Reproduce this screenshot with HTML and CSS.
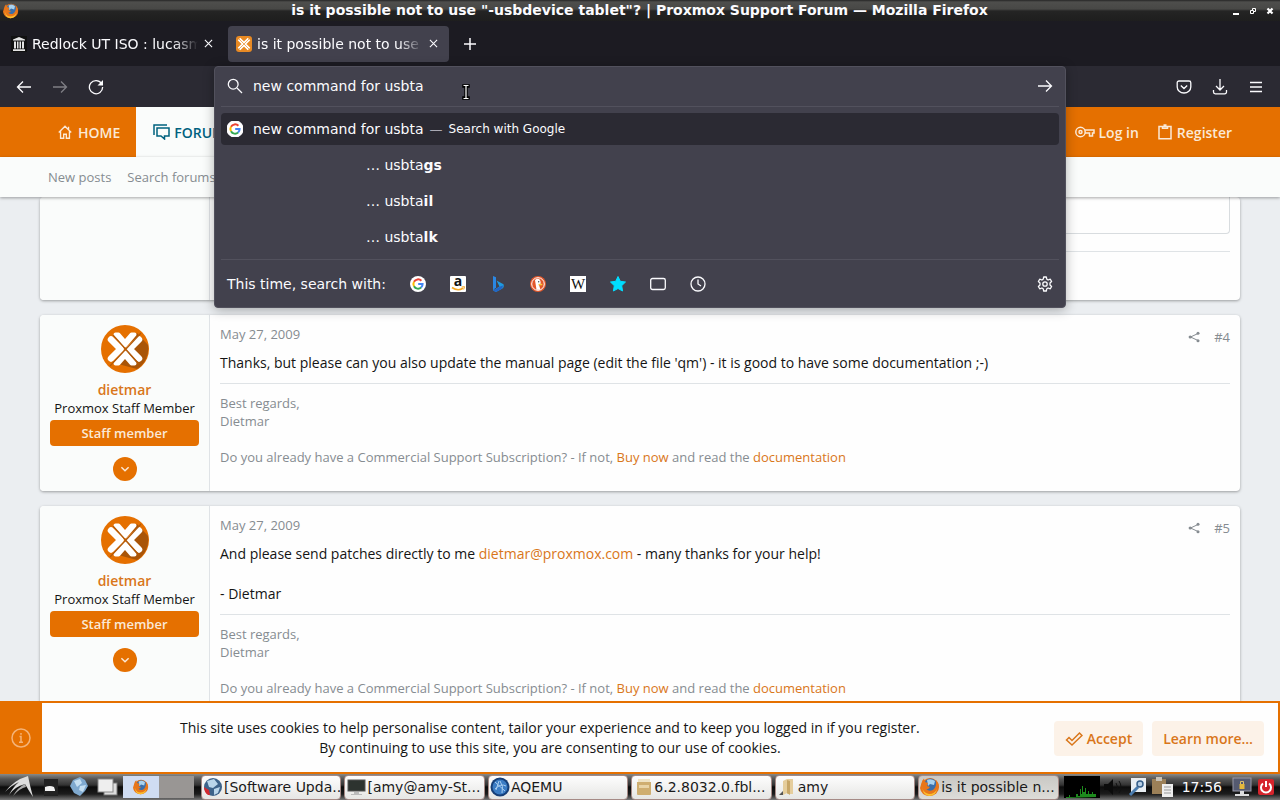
FILE: index.html
```
<!DOCTYPE html>
<html lang="en">
<head>
<meta charset="utf-8">
<title>is it possible not to use "-usbdevice tablet"? | Proxmox Support Forum</title>
<link rel="stylesheet" href="styles.css">
</head>
<body>

<svg class="defs" aria-hidden="true">
<symbol id="google" viewBox="0 0 16 16">
<circle cx="8" cy="8" r="8" fill="#fff"/>
<g fill="none" stroke-width="2"><path d="M11.4 4.8A4.6 4.6 0 0 0 4 5.8" stroke="#ea4335"/><path d="M4 5.8a4.6 4.6 0 0 0 0 4.5" stroke="#fbbc05"/><path d="M4 10.3a4.6 4.6 0 0 0 7.1 1.2" stroke="#34a853"/><path d="M11.1 11.5A4.6 4.6 0 0 0 12.6 8H8.2" stroke="#4285f4"/></g>
</symbol>
<symbol id="firefox" viewBox="0 0 20 20">
<circle cx="10" cy="10" r="9" fill="#e2731b"/>
<circle cx="10.500" cy="8" r="6.500" fill="#3a6eaa"/>
<path d="M7 3q4-2 8 1l-1 4-4-1-2 2z" fill="#a9d2ee"/>
<path d="M1.500 6Q2 3 4 1.500L5 5l3 1-1 3 3 1q-2 3-4 2 3 3 7 1 4-3 3-10 4 4 2 9-3 7-9 7-8-1-9-8z" fill="#e8761a"/>
<path d="M2 8q0 8 7 9 6 0 8-5-1 7-8 7-7-1-7-11z" fill="#fbc02f"/>
</symbol>
<symbol id="proxmox" viewBox="0 0 48 48">
<circle cx="24" cy="24" r="24" fill="#e57000"/>
<path d="M36 8l11 12a24 24 0 0 1-11 24L17 39z" fill="#a95508"/>
<g fill="none" stroke="#fff" stroke-width="6.500" stroke-linejoin="round" stroke-linecap="round"><path d="M14.500 9.500h3L24 17l6.500-7.500h3L24 20.500z" fill="#fff" stroke-width="4"/><path d="M14.500 38.500h3L24 31l6.500 7.500h3L24 27.500z" fill="#fff" stroke-width="4"/><path d="M10 14.500l9.500 9.500L10 33.500M38 14.500L28.500 24l9.500 9.500"/></g>
<path d="M9 41L40 8M12 10l26 29" stroke="#b35a08" stroke-width="1.200"/>
</symbol>
<symbol id="share" viewBox="0 0 12 12">
<path d="M10 2.500L2.500 6l7.500 3.500" fill="none" stroke="#868c91"/><circle cx="10" cy="2.200" r="1.500" fill="#868c91"/><circle cx="2.200" cy="6" r="1.600" fill="#868c91"/><circle cx="10" cy="9.800" r="1.500" fill="#868c91"/>
</symbol>
</svg>

<div class="titlebar">
<svg class="title-icon" viewBox="0 0 20 20"><use href="#firefox"/></svg>
<div class="title-text">is it possible not to use "-usbdevice tablet"? | Proxmox Support Forum — Mozilla Firefox</div>
<div class="win-buttons">
<button aria-label="Minimize"><svg viewBox="0 0 8 8"><path d="M1 7h6" stroke="#fff" stroke-width="2"/></svg></button>
<button aria-label="Restore"><svg viewBox="0 0 8 8"><path d="M1.500 3.500h3v3h-3zM3.500 3V1.500h3v3H5" fill="none" stroke="#fff"/></svg></button>
<button aria-label="Close window"><svg viewBox="0 0 8 8"><path d="M1.500 1.500l5 5M6.500 1.500l-5 5" stroke="#fff" stroke-width="2.200"/></svg></button>
</div>
</div>

<div class="tabs">
<div class="tab">
<svg class="favicon" viewBox="0 0 16 16"><rect width="16" height="16" fill="#111"/><path d="M8 1l6 2.500v1H2v-1zM3 5.500h2v7H3zM6 5.500h1.500v7H6zM8.500 5.500H10v7H8.500zM11 5.500h2v7h-2zM2 13.200h12V15H2z" fill="#e4e4e4"/></svg>
<span class="tab-label">Redlock UT ISO : lucasm</span>
<button class="tab-close" aria-label="Close tab"><svg viewBox="0 0 10 10"><path d="M1 1l8 8M9 1L1 9" stroke="#fbfbfe" stroke-width="1.200"/></svg></button>
</div>
<div class="tab active">
<svg class="favicon" viewBox="0 0 16 16"><rect width="16" height="16" rx="3" fill="#e88a24"/><path d="M3 3l10 10M13 3L3 13" stroke="#fff" stroke-width="3.600"/><path d="M3 13L13 3M3 3l10 10" stroke="#e88a24" stroke-width=".7"/></svg>
<span class="tab-label">is it possible not to use "</span>
<button class="tab-close" aria-label="Close tab"><svg viewBox="0 0 10 10"><path d="M1 1l8 8M9 1L1 9" stroke="#fbfbfe" stroke-width="1.200"/></svg></button>
</div>
<button class="new-tab" aria-label="New tab"><svg viewBox="0 0 12 12"><path d="M6 0v12M0 6h12" stroke="#fbfbfe" stroke-width="1.500"/></svg></button>
</div>

<div class="toolbar">
<button aria-label="Back"><svg viewBox="0 0 16 16"><path d="M15 8H1.500M7 2.500L1.500 8 7 13.500"/></svg></button>
<button aria-label="Forward" class="off"><svg viewBox="0 0 16 16"><path d="M1 8h13.500M9 2.500L14.500 8 9 13.500"/></svg></button>
<button aria-label="Reload"><svg viewBox="0 0 16 16"><path d="M13.500 4.500A6.600 6.600 0 1 0 14.600 8"/><path d="M15 1v5.500H9.500z" fill="#fbfbfe" stroke="none"/></svg></button>
<span class="spacer"></span>
<button aria-label="Pocket"><svg viewBox="0 0 16 16"><path d="M3 2h10a1.800 1.800 0 0 1 1.800 1.800V8a6.800 6 0 0 1-13.600 0V3.800A1.800 1.800 0 0 1 3 2zM4.800 6.500L8 9.500l3.200-3"/></svg></button>
<button aria-label="Downloads"><svg viewBox="0 0 16 16"><path d="M8 0v11M4 7l4 4 4-4M1.500 11v2A1.800 1.800 0 0 0 3.300 14.800h9.400a1.800 1.800 0 0 0 1.800-1.800v-2"/></svg></button>
<button aria-label="Menu"><svg viewBox="0 0 16 16"><path d="M2 3.500h12M2 8h12M2 12.500h12"/></svg></button>

<div class="urlbar">
<div class="url-row">
<svg class="ico" viewBox="0 0 16 16"><circle cx="6.200" cy="6.200" r="4.900"/><path d="M10 10l5 5"/></svg>
<input type="text" aria-label="Search or enter address" value="new command for usbta">
<button aria-label="Go"><svg class="ico" viewBox="0 0 16 16"><path d="M1 8h13.500M9 2.500L14.500 8 9 13.500"/></svg></button>
</div>
<a class="result selected" href="#"><svg class="ico" viewBox="0 0 16 16"><use href="#google"/></svg><span>new command for usbta</span><i>—</i><small>Search with Google</small></a>
<a class="result tail" href="#"><span>… usbta<b>gs</b></span></a>
<a class="result tail" href="#"><span>… usbta<b>il</b></span></a>
<a class="result tail" href="#"><span>… usbta<b>lk</b></span></a>
<div class="engines">
<span class="engines-label">This time, search with:</span>
<button aria-label="Google"><svg viewBox="0 0 16 16"><use href="#google"/></svg></button>
<button aria-label="Amazon"><svg viewBox="0 0 16 16"><rect width="16" height="16" rx="1" fill="#fff"/><text x="8" y="10" text-anchor="middle" class="logo-a">a</text><path d="M2 11.500q5.500 4 11 .8" fill="none" stroke="#f7a823" stroke-width="1.600"/><path d="M11.500 11l3-.3-.8 2.800" fill="none" stroke="#f7a823"/></svg></button>
<button aria-label="Bing"><svg viewBox="0 0 16 16"><path d="M3 0l3 1.200v10L3 14.500z" fill="#2b87e3"/><path d="M6.500 4.500l7 3.800q1 3-1.500 4.500l-6 3.200-3-1.500 6.500-4z" fill="#1f9be0"/><path d="M3 14.500l7-4 3-1q0 2.500-2 3.700L6 16z" fill="#2364c4"/></svg></button>
<button aria-label="DuckDuckGo"><svg viewBox="0 0 16 16"><circle cx="8" cy="8" r="8" fill="#e4582b"/><circle cx="8" cy="8" r="6.300" fill="none" stroke="#fff"/><path d="M5 4q3-2.500 5 0 1 2 .5 4L9 9l1.500 4.800H6.500z" fill="#fff"/><path d="M8.500 7.800h3.800v1.500H8.500z" fill="#fcc63a"/><circle cx="8.700" cy="5.700" r=".7" fill="#345"/></svg></button>
<button aria-label="Wikipedia"><svg viewBox="0 0 16 16"><rect width="16" height="16" fill="#fff"/><text x="8" y="13" text-anchor="middle" class="logo-w">W</text></svg></button>
<button aria-label="Bookmarks"><svg viewBox="0 0 16 16"><path d="M8 .5l2.300 4.800 5.200.7-3.800 3.700.9 5.300L8 12.500 3.400 15l.9-5.300L.5 6l5.200-.7z" fill="#00ddff" stroke="#00ddff" stroke-linejoin="round"/></svg></button>
<button aria-label="Tabs"><svg class="ico" viewBox="0 0 16 16"><rect x=".7" y="2.500" width="14.600" height="11" rx="1.800"/></svg></button>
<button aria-label="History"><svg class="ico" viewBox="0 0 16 16"><circle cx="8" cy="8" r="7"/><path d="M8 3.500V8l3 2"/></svg></button>
<span class="spacer"></span>
<button aria-label="Search settings"><svg class="ico" viewBox="0 0 16 16"><circle cx="8" cy="8" r="2.200"/><path d="M6.700 1h2.600l.5 2.200 1.300.8 2.200-.8 1.300 2.300L13 7v2l1.600 1.500-1.300 2.300-2.200-.8-1.300.8-.5 2.200H6.700l-.5-2.200-1.300-.8-2.200.8-1.300-2.300L3 9V7L1.400 5.500l1.300-2.300 2.200.8 1.300-.8z" stroke-linejoin="round"/></svg></button>
</div>
<svg class="cursor" viewBox="0 0 8 16"><path d="M1 1h6v2H5v10h2v2H1v-2h2V3H1z" fill="#000" stroke="#000" stroke-width="1.500"/><path d="M1.500 1.500h5M1.500 14.500h5M4 1.500v13" stroke="#fff" stroke-width="1.200"/></svg>
</div>
</div>

<div class="page">
<nav class="nav">
<a class="nav-home" href="#"><svg viewBox="-1 -1 18 18"><path d="M1 8.500l7-7 7 7M3 7v8h3.500v-4.500h3V15H13V7M12 2v3.500"/></svg>HOME</a>
<a class="nav-forums" href="#"><svg viewBox="0 0 18 16"><path d="M2 11V1h13M5 4h12v8h-4.500v3L9 12H5z"/></svg>FORUMS</a>
<span class="spacer"></span>
<a href="#"><svg class="key" viewBox="0 0 20 12"><circle cx="5.500" cy="6" r="4.700"/><circle cx="5.500" cy="6" r="1.500"/><path d="M10 4h9v3h-1.500v3h-3V7H10"/></svg>Log in</a>
<a href="#"><svg viewBox="0 0 16 16"><path d="M2 2.500h12v12.300H2zM5.500 2.500h5v1.700h-5zM6.500 1h3"/></svg>Register</a>
</nav>
<div class="subnav"><a href="#">New posts</a><a href="#">Search forums</a></div>

<div class="posts">
<div class="post first">
<div class="user"></div>
<div class="message"><div class="quote"></div><div class="sig"></div></div>
</div>

<div class="post">
<div class="user">
<svg class="avatar" viewBox="0 0 48 48"><use href="#proxmox"/></svg>
<a class="name" href="#">dietmar</a>
<div class="role">Proxmox Staff Member</div>
<div class="staff">Staff member</div>
<button class="more" aria-label="Show details"><svg viewBox="0 0 10 10"><path d="M2 3.500l3 3 3-3"/></svg></button>
</div>
<div class="message">
<div class="meta"><span>May 27, 2009</span><span class="meta-right"><svg viewBox="0 0 12 12"><use href="#share"/></svg><a href="#">#4</a></span></div>
<p>Thanks, but please can you also update the manual page (edit the file 'qm') - it is good to have some documentation ;-)</p>
<div class="sig">Best regards,<br>Dietmar<br><br>Do you already have a Commercial Support Subscription? - If not, <a href="#">Buy now</a> and read the <a href="#">documentation</a></div>
</div>
</div>

<div class="post">
<div class="user">
<svg class="avatar" viewBox="0 0 48 48"><use href="#proxmox"/></svg>
<a class="name" href="#">dietmar</a>
<div class="role">Proxmox Staff Member</div>
<div class="staff">Staff member</div>
<button class="more" aria-label="Show details"><svg viewBox="0 0 10 10"><path d="M2 3.500l3 3 3-3"/></svg></button>
</div>
<div class="message">
<div class="meta"><span>May 27, 2009</span><span class="meta-right"><svg viewBox="0 0 12 12"><use href="#share"/></svg><a href="#">#5</a></span></div>
<p>And please send patches directly to me <a href="#">dietmar@proxmox.com</a> - many thanks for your help!<br><br>- Dietmar</p>
<div class="sig">Best regards,<br>Dietmar<br><br>Do you already have a Commercial Support Subscription? - If not, <a href="#">Buy now</a> and read the <a href="#">documentation</a></div>
</div>
</div>
</div>

<div class="cookies">
<div class="cookie-icon"><svg viewBox="0 0 20 20"><circle cx="10" cy="10" r="9"/><path d="M8.500 8.500H10V14M8 14.200h4M10 5v1.800"/></svg></div>
<div class="cookie-text">This site uses cookies to help personalise content, tailor your experience and to keep you logged in if you register.<br>By continuing to use this site, you are consenting to our use of cookies.</div>
<div class="cookie-buttons">
<button><svg viewBox="0 0 18 16"><path d="M1.500 9L4 6.500l3 3L14.500 2 17 4.500 7 14z"/></svg>Accept</button>
<button>Learn more…</button>
</div>
</div>
</div>

<div class="taskbar">
<div class="launchers">
<button aria-label="Menu"><svg class="bird" viewBox="0 0 28 24"><path d="M0 17Q9 5 23 1q2 10 5 21-4-6-8-13Q9 12 4 20 8 12 14 7 7 10 0 17z" fill="#ddd"/><path d="M8 21q5-9 12-12l1 3q-6 1-13 9z" fill="#aaa"/></svg></button>
<button aria-label="Files"><svg viewBox="0 0 20 24"><rect x="4" y="4" width="14" height="17" fill="#222"/><path d="M5 12q5-2 9 0l1 3v1H5z" fill="#f2f2f2"/></svg></button>
<button aria-label="Web"><svg viewBox="0 0 20 24"><path d="M4 5l7-3 5 3 3 6-3 5-5 5-6-3-4-7z" fill="#7fa9cf"/><path d="M5 6l6-2 2 4-5 4zM11 11l6-1-3 7-4-2z" fill="#c5dff2"/></svg></button>
<button aria-label="Show desktop"><svg viewBox="0 0 22 24"><rect x="7" y="8" width="13" height="12" fill="#ddd" stroke="#777"/><rect x="1" y="4" width="15" height="13" fill="#eee" stroke="#888"/></svg></button>
</div>
<div class="pager"><button class="current" aria-label="Desktop 1"><svg viewBox="0 0 20 20"><use href="#firefox"/></svg></button><button aria-label="Desktop 2"></button></div>
<div class="tasks">
<button><svg viewBox="0 0 20 20"><circle cx="10" cy="10" r="9" fill="#3d638a"/><path d="M4 4l7-2 4 5-5 4-4-1zM11 12l6-2-2 6-4 2z" fill="#b9d5ea"/><path d="M1 10l5 3 1 5-2 0q-4-3-4-8z" fill="#d22a30"/></svg>[Software Upda...</button>
<button><svg viewBox="0 0 20 20"><rect x="2" y="3" width="17" height="11" fill="#2d332f" stroke="#555"/><path d="M8 15h5v2h3v1H5v-1h3z" fill="#bbb"/></svg>[amy@amy-St...</button>
<button><svg viewBox="0 0 20 20"><circle cx="10" cy="10" r="9.500" fill="#163f78"/><circle cx="10" cy="10" r="7.500" fill="#3b7cc4"/><path d="M5 5l10 9M6 13l3-9M5 12q6-6 11-3M10 4q4 5 2 12" fill="none" stroke="#a8cdf0"/></svg>AQEMU</button>
<button><svg viewBox="0 0 20 20"><path d="M5 2h12v8H5z" fill="#efe3c4"/><path d="M4 5h14v12q0 1-1 1H5q-1 0-1-1z" fill="#cfae70"/><path d="M6 8h10v3H6z" fill="#e9d4a6"/></svg>6.2.8032.0.fbl...</button>
<button><svg viewBox="0 0 20 20"><path d="M6 4l4-2v14l-4 2zM10 2h6v15h-6z" fill="#e5cd9c"/><path d="M10 3l3 1v14l-3-2z" fill="#c7a667"/><path d="M2 18l4-4v4z" fill="#555"/></svg>amy</button>
<button class="current"><svg viewBox="0 0 20 20"><use href="#firefox"/></svg>is it possible n...</button>
</div>
<div class="tray">
<svg class="cpu" viewBox="0 0 36 22"><rect width="36" height="22" fill="#000"/><path d="M2 22v-1h3v-2h1v2h6v-3h2v2h2v-7h1v5h1v-8h1v6h2v-4h1v6h2v-3h1v3h3v-2h1v2h3v3z" fill="#1d8a1d"/></svg>
<svg class="wide" viewBox="0 0 24 22"><path d="M2 8h4l5-5v16l-5-5H2z" fill="#0b0b0b"/><path d="M14 7q3 4 0 8M17 5q4 6 0 12" fill="none" stroke="#111"/></svg>
<svg viewBox="0 0 20 22"><rect x="3" y="2" width="15" height="14" fill="#e8edf2"/><path d="M2 19l8-8" stroke="#4a7cae" stroke-width="3"/><circle cx="12" cy="8" r="3" fill="#b7cfe6" stroke="#345d88" stroke-width="1.500"/></svg>
<svg class="wide" viewBox="0 0 24 22"><path d="M2 3h14v15H2z" fill="#9c8058"/><path d="M6 1h6v4H6z" fill="#c7c2b8"/><path d="M12 8h11v13H12z" fill="#eee"/><path d="M14 11h7M14 14h7M14 17h7" stroke="#999"/></svg>
<span class="clock">17:56</span>
<svg class="wide" viewBox="0 0 24 22"><rect x="3" y="2" width="18" height="13" fill="#555a70" stroke="#9a9aa8"/><path d="M10 15h4v3h5v2H5v-2h5z" fill="#ddd"/><path d="M9.500 8h5v5h-5z" fill="#e5b93c"/><path d="M10.500 8V5.500h3V8" fill="none" stroke="#ddc070"/></svg>
<svg viewBox="0 0 20 22"><rect x="2" y="3" width="16" height="16" rx="2" fill="#d6242c"/><path d="M7 7.500a5 5 0 1 0 6 0M10 5v6" fill="none" stroke="#fff" stroke-width="2"/></svg>
</div>
</div>

</body>
</html>
```
FILE: styles.css
```
* {
box-sizing:border-box;
}
body {
margin:0;
height:100vh;
display:flex;
flex-direction:column;
overflow:hidden;
background-color:#1c1b22;
font-family:"DejaVu Sans", sans-serif;
font-size:14px;
color:#fbfbfe;
}
button {
border:0;
padding:0;
background:none;
font:inherit;
color:inherit;
display:flex;
align-items:center;
justify-content:center;
}
a {
text-decoration:none;
color:inherit;
}
svg {
display:block;
flex:none;
}
.defs {
position:absolute;
width:0;
height:0;
}
.spacer {
flex:1;
}

/* window title */
.titlebar {
height:21px;
display:flex;
align-items:center;
background:linear-gradient(#262626 0, #4e4e4c 2px, #484846 9px, #242424 11px, #1e1e1e 100%);
}
.title-icon {
width:16px;
height:16px;
margin-left:3px;
}
.title-text {
flex:1;
text-align:center;
font-weight:bold;
line-height:18px;
padding:0 0 2px 28px;
}
.win-buttons {
display:flex;
gap:9px;
padding-right:6px;
}
.win-buttons svg {
width:8px;
height:8px;
}

/* tabs */
.tabs {
height:45px;
display:flex;
align-items:center;
padding-left:3px;
gap:4px;
}
.tab {
width:221px;
height:36px;
display:flex;
align-items:center;
padding:0 10px 0 8px;
border-radius:4px;
}
.tab.active {
background-color:#42414d;
}
.favicon {
width:16px;
height:16px;
margin-right:5px;
}
.tab-label {
flex:1;
overflow:hidden;
white-space:nowrap;
-webkit-mask-image:linear-gradient(to left, transparent, #000 24px);
mask-image:linear-gradient(to left, transparent, #000 24px);
}
.tab-close {
width:12px;
margin-left:4px;
}
.tab-close svg {
width:9px;
height:9px;
}
.new-tab {
width:34px;
}
.new-tab svg {
width:12px;
height:12px;
}

/* toolbar and address drop-down */
.toolbar {
position:relative;
z-index:2;
height:41px;
display:flex;
align-items:center;
padding:0 6px;
background-color:#2b2a33;
}
.toolbar > button {
width:36px;
height:36px;
}
.toolbar > button > svg,
.ico {
width:16px;
height:16px;
fill:none;
stroke:#fbfbfe;
stroke-width:1.3;
}
.off {
opacity:.4;
}
.urlbar {
position:absolute;
top:0;
left:214px;
right:214px;
background-color:#42414d;
border:1px solid #52515d;
border-radius:4px;
padding:0 6px;
box-shadow:0 2px 12px rgba(0,0,0,.3);
}
.url-row {
display:flex;
align-items:center;
height:40px;
padding:0 6px 2px;
gap:10px;
border-bottom:1px solid #52515d;
margin-bottom:6px;
}
.url-row input {
flex:1;
border:0;
padding:0;
outline:0;
background:none;
font:inherit;
color:inherit;
}
.result {
display:flex;
align-items:center;
height:32px;
padding:0 6px;
margin-bottom:4px;
border-radius:4px;
}
.result.selected {
background-color:#2b2a33;
}
.result .ico {
margin-right:10px;
}
.result i {
font-style:normal;
font-size:13px;
color:#aaa9b3;
margin:0 6px;
}
.result small {
font-size:12px;
}
.result.tail {
padding-left:145px;
}
.engines {
display:flex;
align-items:center;
height:48px;
margin-top:6px;
padding:0 6px;
border-top:1px solid #52515d;
}
.engines-label {
margin-right:12px;
}
.engines button {
width:40px;
height:32px;
}
.engines button:last-child {
width:16px;
}
.engines svg {
width:16px;
height:16px;
}
.logo-a {
font:bold 14px "Open Sans", sans-serif;
fill:#111;
}
.logo-w {
font:15px "Liberation Serif", serif;
fill:#111;
}
.cursor {
position:absolute;
left:247px;
top:17px;
width:8px;
height:16px;
}

/* forum page */
.page {
flex:1;
min-height:0;
position:relative;
overflow:hidden;
display:flex;
flex-direction:column;
background-color:#ebeef1;
font-family:"Open Sans", sans-serif;
color:#141414;
}
.nav {
flex:none;
height:50px;
display:flex;
background-color:#e57000;
color:#fbe9d6;
font-weight:600;
padding-right:32px;
}
.nav a {
display:flex;
align-items:center;
gap:4px;
padding:0 16px 0 2px;
}
.nav svg {
width:16px;
height:16px;
fill:none;
stroke:currentColor;
stroke-width:1.5;
}
.nav .key {
width:20px;
height:12px;
}
.nav .nav-home {
padding:0 16px 0 57px;
gap:5px;
}
.nav .nav-forums {
background-color:#fafcfb;
color:#00617f;
padding:0 16px;
}
.nav .nav-forums svg {
width:18px;
}
.subnav {
flex:none;
z-index:1;
height:40px;
display:flex;
align-items:center;
gap:16px;
padding-left:48px;
background-color:#fafcfb;
color:#868c91;
font-size:13px;
box-shadow:0 1px 3px rgba(0,0,0,.35);
}
.posts {
padding:0 40px;
}
.post {
display:flex;
margin-bottom:15px;
background-color:#fefefe;
border-radius:4px;
box-shadow:0 1px 3px rgba(0,0,0,.35);
}
.user {
width:170px;
flex:none;
padding:10px;
background-color:#fafcfb;
border-right:1px solid #dfe3e6;
border-radius:4px 0 0 4px;
text-align:center;
font-size:13px;
line-height:18px;
}
.avatar {
width:48px;
height:48px;
margin:0 auto 7px;
}
.name {
display:block;
font-size:14px;
font-weight:600;
line-height:19px;
color:#d9761a;
}
.staff {
margin-top:3px;
line-height:26px;
background-color:#e57000;
border-radius:4px;
color:#fbe9d6;
font-weight:600;
}
.more {
width:24px;
height:24px;
margin:11px auto 0;
border-radius:50%;
background-color:#e57000;
}
.more svg {
width:12px;
height:12px;
fill:none;
stroke:#fbe9d6;
stroke-width:1.2;
}
.message {
flex:1;
padding:10px;
}
.message a {
color:#d9761a;
}
.meta {
display:flex;
justify-content:space-between;
font-size:13px;
line-height:18px;
color:#868c91;
}
.meta-right {
display:flex;
align-items:center;
gap:14px;
padding-top:4px;
margin-bottom:-4px;
height:20px;
}
.meta-right svg {
width:12px;
height:12px;
}
.message .meta-right a {
color:#868c91;
}
.message p {
margin:10px 0;
line-height:20px;
}
.sig {
border-top:1px solid #dfe3e6;
padding-top:10px;
font-size:13px;
line-height:18px;
color:#868c91;
}
.first .message {
padding-top:0;
padding-bottom:38px;
}
.quote {
height:37px;
margin-bottom:17px;
border:1px solid #d8dcdf;
border-top:0;
border-radius:0 0 4px 4px;
}

/* cookie notice */
.cookies {
position:absolute;
z-index:1;
left:0;
right:0;
bottom:0;
height:73px;
display:flex;
align-items:center;
background-color:#fefefe;
border:2px solid #e57000;
border-left:0;
padding-right:14px;
}
.cookie-icon {
align-self:stretch;
width:42px;
display:flex;
align-items:center;
justify-content:center;
background-color:#e57000;
}
.cookie-icon svg {
width:20px;
height:20px;
fill:none;
stroke:#f4b377;
stroke-width:1.5;
}
.cookie-text {
flex:1;
text-align:center;
line-height:20px;
padding-left:4px;
}
.cookie-buttons {
display:flex;
gap:9px;
padding-top:2px;
}
.cookie-buttons button {
height:35px;
padding:0 11px;
gap:4px;
border-radius:4px;
background-color:#fcf2e8;
color:#d9761a;
font-weight:600;
}
.cookie-buttons svg {
width:18px;
height:16px;
fill:none;
stroke:#d9761a;
stroke-width:1.5;
}

/* desktop panel */
.taskbar {
height:26px;
display:flex;
align-items:center;
background:linear-gradient(#8a8a88 0, #555 5px, #333 11px, #0c0c0c 13px, #1c1c1c 20px, #777 100%);
}
.launchers {
display:flex;
align-items:center;
gap:5px;
width:123px;
padding-left:5px;
}
.launchers svg {
width:24px;
height:24px;
}
.launchers .bird {
width:28px;
}
.pager {
display:flex;
height:22px;
width:78px;
padding-right:7px;
}
.pager button {
flex:1;
background-color:#999694;
}
.pager .current {
background-color:#cfdcf2;
}
.pager svg {
width:16px;
height:16px;
}
.tasks {
flex:1;
min-width:0;
display:flex;
gap:3px;
height:25px;
}
.tasks button {
flex:1 1 0;
min-width:0;
justify-content:flex-start;
gap:1px;
padding-left:1px;
overflow:hidden;
white-space:nowrap;
background:linear-gradient(#fdfdfd, #e6e6e4);
border:1px solid #a58a86;
border-radius:4px;
color:#1a1a1a;
}
.tasks .current {
background:linear-gradient(#c9c8c4, #dddcd8);
}
.tasks svg {
width:20px;
height:20px;
}
.tray {
display:flex;
align-items:center;
padding:0 4px 0 5px;
}
.tray svg {
width:20px;
height:22px;
}
.tray .cpu {
width:36px;
}
.tray .wide {
width:28px;
}
.clock {
padding:0 6px;
}
```
